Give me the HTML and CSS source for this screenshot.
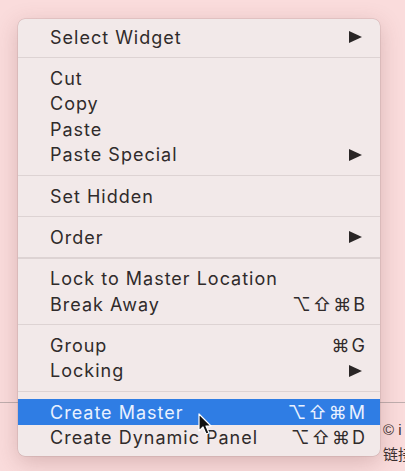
FILE: index.html
```html
<!DOCTYPE html>
<html>
<head>
<meta charset="utf-8">
<link rel="stylesheet" href="styles.css">
</head>
<body>
<div class="page">
  <div class="bg-line"></div>
  <div class="bg-text bg-copy">© i</div>
  <div class="bg-text bg-link">链接</div>
  <div class="menu">
    <div class="row"><span class="label">Select Widget</span><span class="arrow"></span></div>
    <div class="sep"></div>
    <div class="row"><span class="label">Cut</span></div>
    <div class="row"><span class="label">Copy</span></div>
    <div class="row"><span class="label">Paste</span></div>
    <div class="row"><span class="label">Paste Special</span><span class="arrow"></span></div>
    <div class="sep"></div>
    <div class="row"><span class="label">Set Hidden</span></div>
    <div class="sep"></div>
    <div class="row"><span class="label">Order</span><span class="arrow"></span></div>
    <div class="sep"></div>
    <div class="row"><span class="label">Lock to Master Location</span></div>
    <div class="row"><span class="label">Break Away</span><span class="key">⌥⇧⌘B</span></div>
    <div class="sep"></div>
    <div class="row"><span class="label">Group</span><span class="key">⌘G</span></div>
    <div class="row"><span class="label">Locking</span><span class="arrow"></span></div>
    <div class="sep"></div>
    <div class="row active"><span class="label">Create Master</span><span class="key">⌥⇧⌘M</span></div>
    <div class="row"><span class="label">Create Dynamic Panel</span><span class="key">⌥⇧⌘D</span></div>
  </div>
  <svg class="cursor" width="16" height="24" viewBox="0 0 16 24">
    <path d="M1 1 L1 18 L5 14 L8 21 L11 20 L8 13 L13 13 Z" fill="#111" stroke="#fff" stroke-width="1.2" stroke-linejoin="round"/>
  </svg>
</div>
</body>
</html>
```
FILE: styles.css
```css
html, body {
  margin: 0;
  padding: 0;
}
body {
  background: #fadcdc;
  font-family: "Inter", "Liberation Sans", sans-serif;
}
.page {
  position: relative;
  width: 405px;
  height: 471px;
  overflow: hidden;
  background: #fadcdc;
}
.bg-line {
  position: absolute;
  left: 0;
  right: 0;
  top: 402px;
  height: 1px;
  background: #bfaeae;
}
.bg-text {
  position: absolute;
  left: 383px;
  font-size: 15px;
  color: #3a3030;
  font-family: "Liberation Sans", "Noto Sans CJK SC", sans-serif;
  white-space: nowrap;
}
.bg-copy { top: 421px; }
.bg-link { top: 443px; }
.menu {
  position: absolute;
  left: 18px;
  top: 19px;
  width: 362px;
  padding: 5.25px 0;
  background: #f2e9e9;
  border-radius: 7px;
  box-shadow: 0 0 0 0.5px rgba(150, 120, 120, 0.35), 0 6px 22px rgba(120, 60, 60, 0.25);
}
.row {
  height: 25.5px;
  display: flex;
  align-items: center;
  justify-content: space-between;
  padding: 0 15px 0 32px;
  font-size: 18px;
  color: #302b2b;
}
.row.active {
  background: #2f7de4;
  color: #e9f1ff;
}
.label {
  letter-spacing: 1px;
}
.key {
  font-family: "Inter", "DejaVu Sans", sans-serif;
  font-size: 18px;
  letter-spacing: 2px;
  margin-right: -2px;
}
.arrow {
  width: 0;
  height: 0;
  margin-right: 3px;
  border-top: 6px solid transparent;
  border-bottom: 6px solid transparent;
  border-left: 13px solid #2a2626;
}
.sep {
  height: 15.75px;
  display: flex;
  align-items: center;
}
.sep::before {
  content: "";
  flex: 1;
  height: 1.5px;
  background: #ddd3d3;
}
.cursor {
  position: absolute;
  left: 198px;
  top: 413px;
}
```
